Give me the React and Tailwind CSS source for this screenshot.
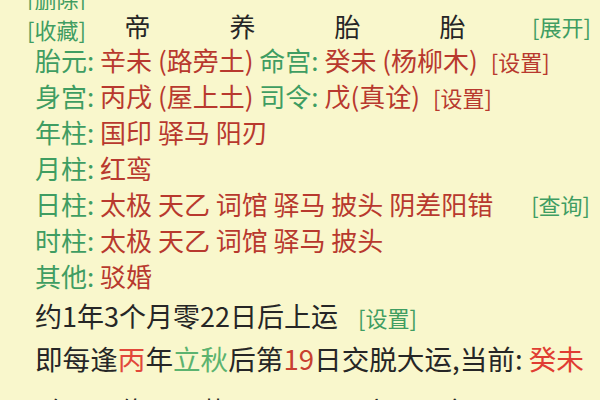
const green = "text-[#3f9d62]";
const red = "text-[#b8392e]";

const infoRows = [
  {
    label: "胎元",
    content: (
      <>
        <span className={red}>辛未 (路旁土)</span> <span className={green}>命宫:</span>{" "}
        <span className={red}>癸未 (杨柳木)</span>
        <span className={`${red} ml-[13px] text-[22px]`}>[设置]</span>
      </>
    ),
  },
  {
    label: "身宫",
    content: (
      <>
        <span className={red}>丙戌 (屋上土)</span> <span className={green}>司令:</span>{" "}
        <span className={red}>戊(真诠)</span>
        <span className={`${red} ml-[13px] text-[22px]`}>[设置]</span>
      </>
    ),
  },
  { label: "年柱", content: <span className={red}>国印 驿马 阳刃</span> },
  { label: "月柱", content: <span className={red}>红鸾</span> },
  {
    label: "日柱",
    content: <span className={red}>太极 天乙 词馆 驿马 披头 阴差阳错</span>,
    action: "[查询]",
  },
  { label: "时柱", content: <span className={red}>太极 天乙 词馆 驿马 披头</span> },
  { label: "其他", content: <span className={red}>驳婚</span> },
];

const topCols = ["帝", "养", "胎", "胎"];
const bottomCols = ["胎", "绝", "墓", "死", "病", "衰"];

export default function App() {
  return (
    <div
      className="w-[600px] h-[400px] overflow-hidden bg-[#f9f7cc] text-[#262626] whitespace-nowrap"
      style={{ fontFamily: '"Noto Sans CJK SC", "Noto Sans", sans-serif' }}
    >
      {/* cut-off first line */}
      <div className="h-[10px] overflow-hidden flex items-end pl-[27px]">
        <span className={`${green} text-[22px] leading-[24px] shrink-0`}>[删除]</span>
      </div>

      {/* pillar header */}
      <div className="h-[32px] flex items-center pl-[27px]">
        <span className={`${green} text-[22px] w-[58px] shrink-0 leading-[24px] mt-[6px]`}>[收藏]</span>
        {topCols.map((c, i) => (
          <span key={i} className="w-[105px] shrink-0 text-center text-[26px] leading-[28px]">
            {c}
          </span>
        ))}
        <span className={`${green} text-[22px] ml-[27px] shrink-0 leading-[24px]`}>[展开]</span>
      </div>

      {/* shensha rows */}
      {infoRows.map((r) => (
        <div key={r.label} className="h-[36px] flex items-center justify-between pl-[35px] pr-[10px] text-[26px] leading-[30px]">
          <div>
            <span className={green}>{r.label}:</span> {r.content}
          </div>
          {r.action && <span className={`${green} text-[22px]`}>{r.action}</span>}
        </div>
      ))}

      <div className="h-[44px] pl-[35px] text-[27px] leading-[44px]">
        约1年3个月零22日后上运<span className={`${green} ml-[20px] text-[22px]`}>[设置]</span>
      </div>

      <div className="h-[40px] pl-[35px] text-[27.6px] leading-[40px]">
        即每逢<span className="text-[#e2483a]">丙</span>年<span className="text-[#5cb36f]">立秋</span>后第
        <span className="text-[#c8402f]">19</span>日交脱大运,当前:{" "}
        <span className="text-[#e03d32]">癸未</span>
      </div>

      <div className="h-[44px] flex items-center pl-[12px] text-[26px] leading-[28px]">
        {bottomCols.map((c, i) => (
          <span key={i} className="w-[80.6px] shrink-0 text-center mt-[20px]">
            {c}
          </span>
        ))}
      </div>
    </div>
  );
}
